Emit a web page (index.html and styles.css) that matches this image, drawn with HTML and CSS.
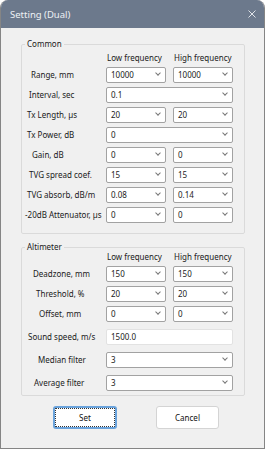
FILE: index.html
```html
<!DOCTYPE html>
<html lang="en">
<head>
    <meta charset="UTF-8">
    <title>Setting (Dual)</title>
    <link rel="stylesheet" href="styles.css">
</head>
<body>
    <div class="window">
        <div class="titlebar">
            <span class="title">Setting (Dual)</span>
            <svg class="close" viewBox="0 0 8 8"><path d="M0.5 0.5 L7.5 7.5 M7.5 0.5 L0.5 7.5"/></svg>
        </div>
        <div class="content">
            <fieldset class="group common">
                <legend>Common</legend>
                <div class="grid">
                    <div></div>
                    <div class="head">Low frequency</div>
                    <div class="head">High frequency</div>

                    <div class="lbl x9">Range, mm</div>
                    <div class="combo">10000</div>
                    <div class="combo">10000</div>

                    <div class="lbl x7">Interval, sec</div>
                    <div class="combo wide">0.1</div>

                    <div class="lbl x5">Tx Length, µs</div>
                    <div class="combo">20</div>
                    <div class="combo">20</div>

                    <div class="lbl x5">Tx Power, dB</div>
                    <div class="combo wide">0</div>

                    <div class="lbl x10">Gain, dB</div>
                    <div class="combo">0</div>
                    <div class="combo">0</div>

                    <div class="lbl x7">TVG spread coef.</div>
                    <div class="combo">15</div>
                    <div class="combo">15</div>

                    <div class="lbl x5">TVG absorb, dB/m</div>
                    <div class="combo">0.08</div>
                    <div class="combo">0.14</div>

                    <div class="lbl x3">-20dB Attenuator, µs</div>
                    <div class="combo">0</div>
                    <div class="combo">0</div>
                </div>
            </fieldset>

            <fieldset class="group altimeter">
                <legend>Altimeter</legend>
                <div class="grid">
                    <div></div>
                    <div class="head">Low frequency</div>
                    <div class="head">High frequency</div>

                    <div class="lbl x11">Deadzone, mm</div>
                    <div class="combo">150</div>
                    <div class="combo">150</div>

                    <div class="lbl x14">Threshold, %</div>
                    <div class="combo">20</div>
                    <div class="combo">20</div>

                    <div class="lbl x17">Offset, mm</div>
                    <div class="combo">0</div>
                    <div class="combo">0</div>

                    <div class="lbl x6 spaced">Sound speed, m/s</div>
                    <div class="textbox wide spaced">1500.0</div>

                    <div class="lbl x16 spaced">Median filter</div>
                    <div class="combo wide spaced">3</div>

                    <div class="lbl x12 spaced">Average filter</div>
                    <div class="combo wide spaced">3</div>
                </div>
            </fieldset>

            <div class="buttons">
                <button class="btn default">Set</button>
                <button class="btn">Cancel</button>
            </div>
        </div>
    </div>
</body>
</html>
```

FILE: styles.css
```css
body {
    margin: 0;
    background: #fff;
    font-family: "Noto Sans", "Open Sans", sans-serif;
    font-size: 8px;
    color: #1a1a1a;
}
.window {
    width: 265px;
    height: 449px;
    box-sizing: border-box;
    border: 1px solid #858585;
    border-top: none;
    border-radius: 8px 8px 0 0;
    background: #f0f0f0;
    overflow: hidden;
}
.titlebar {
    height: 28px;
    background: #6c798c;
    display: flex;
    align-items: center;
    justify-content: space-between;
    padding: 0 8px 0 9px;
}
.title {
    color: #eef1f5;
    font-size: 9.5px;
}
.close {
    width: 8px;
    height: 8px;
    stroke: #dfe3e8;
    stroke-width: 1;
    fill: none;
}
.content {
    padding: 11px 0 0 20px;
}
.group {
    width: 224px;
    box-sizing: border-box;
    margin: 0;
    padding: 4px 10px 10px 0;
    border: 1px solid #dadada;
    border-radius: 2px;
}
.group legend {
    margin-left: 3px;
    padding: 0 2px;
    font-size: 8px;
    line-height: 10px;
}
.altimeter {
    margin-top: 8px;
    padding-top: 0;
    padding-bottom: 4px;
}
.grid {
    display: grid;
    grid-template-columns: 77px 60px 60px;
    column-gap: 7px;
    row-gap: 4px;
    align-items: center;
}
.head {
    line-height: 10px;
    white-space: nowrap;
    padding-left: 1px;
}
.lbl {
    white-space: nowrap;
    line-height: 10px;
}
.x3 { padding-left: 3px; }
.x5 { padding-left: 5px; }
.x6 { padding-left: 6px; }
.x7 { padding-left: 7px; }
.x9 { padding-left: 9px; }
.x10 { padding-left: 10px; }
.x11 { padding-left: 11px; }
.x12 { padding-left: 12px; }
.x14 { padding-left: 14px; }
.x16 { padding-left: 16px; }
.x17 { padding-left: 17px; }
.spaced {
    margin-top: 3px;
}
.combo,
.textbox {
    position: relative;
    height: 16px;
    box-sizing: border-box;
    background: #fff;
    border: 1px solid #a2a2a2;
    border-radius: 2px;
    padding-left: 4px;
    line-height: 14px;
}
.textbox {
    border-color: #e2e2e2;
}
.wide {
    grid-column: 2 / 4;
}
.combo::after {
    content: "";
    position: absolute;
    right: 5px;
    top: 3px;
    width: 3px;
    height: 3px;
    border-right: 1px solid #777;
    border-bottom: 1px solid #777;
    transform: rotate(45deg);
}
.buttons {
    display: flex;
    gap: 39px;
    padding: 10px 0 0 32px;
}
.btn {
    width: 63px;
    height: 23px;
    box-sizing: border-box;
    background: #fff;
    border: 1px solid #d4d4d4;
    border-radius: 3px;
    font-family: inherit;
    font-size: 8px;
    color: #111;
    padding: 0;
}
.btn.default {
    width: 64px;
    border: 2px solid #6aa3dc;
    outline: 1px dotted #333;
    outline-offset: -3px;
}
```
